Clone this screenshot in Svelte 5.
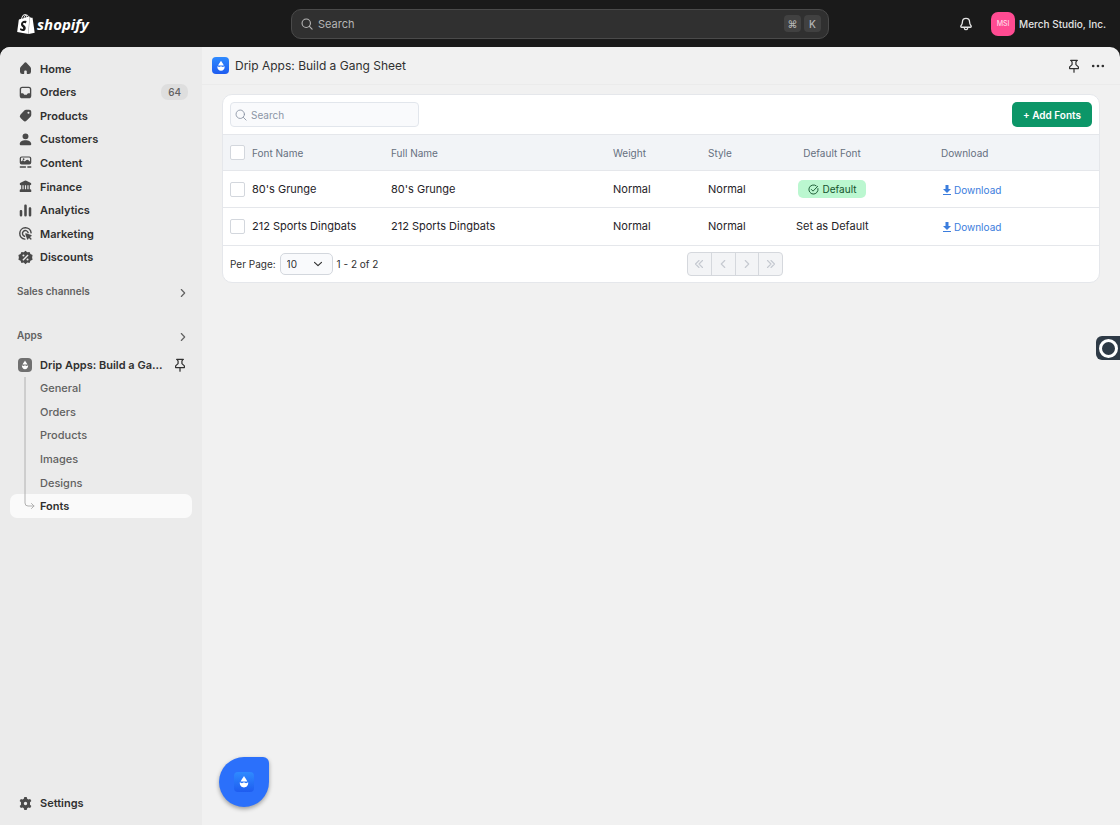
<script lang="ts">
  type NavItem = { label: string; icon: string; count?: number };

  // 20x20 glyphs, filled with the even-odd rule
  const icons: Record<string, string> = {
    home: 'M8.344 3.692a2.25 2.25 0 0 1 3.312 0l3.854 4.19a3.75 3.75 0 0 1 .99 2.538v3.33a2.75 2.75 0 0 1-2.75 2.75h-1.25a1 1 0 0 1-1-1v-2.25a1 1 0 0 0-1-1h-1a1 1 0 0 0-1 1v2.25a1 1 0 0 1-1 1h-1.25a2.75 2.75 0 0 1-2.75-2.75v-3.33c0-.94.353-1.846.99-2.539z',
    orders: 'M6.2 3.2h7.6a3 3 0 0 1 3 3v7.6a3 3 0 0 1-3 3h-7.6a3 3 0 0 1-3-3v-7.6a3 3 0 0 1 3-3zM6.2 4.8a1.4 1.4 0 0 0-1.4 1.4v4.6h1.9c.5 0 .9.3 1.1.7l.3.6c.2.4.6.6 1 .6h1.8c.4 0 .8-.2 1-.6l.3-.6c.2-.4.6-.7 1.1-.7h1.9v-4.6a1.4 1.4 0 0 0-1.4-1.4z',
    products: 'M10.6 3.2h3.7a2.5 2.5 0 0 1 2.5 2.5v3.5a3 3 0 0 1-.9 2.2l-4.5 4.5a2.9 2.9 0 0 1-4.1 0l-3.1-3.1a2.9 2.9 0 0 1 0-4.1l4.4-4.5a3 3 0 0 1 2-1zM13.5 5.5a1.2 1.2 0 1 0 0 2.4a1.2 1.2 0 0 0 0-2.4z',
    customers: 'M10 2.8a3.5 3.5 0 1 1 0 7a3.5 3.5 0 0 1 0-7zM3.2 15.2c0-2.5 3-4.3 6.8-4.3s6.8 1.8 6.8 4.3c0 .9-.7 1.6-1.6 1.6h-10.4c-.9 0-1.6-.7-1.6-1.6z',
    content: 'M5.5 2.8h9a2.3 2.3 0 0 1 2.3 2.3v5a2.3 2.3 0 0 1-2.3 2.3h-9a2.3 2.3 0 0 1-2.3-2.3v-5a2.3 2.3 0 0 1 2.3-2.3zM5.7 4.2a1 1 0 0 0-1 1v3.6l1.4-1a1.5 1.5 0 0 1 1.9.1l1 .9l2.2-1.7a1.5 1.5 0 0 1 1.9 0l2.2 1.7v-3.6a1 1 0 0 0-1-1zM7.8 5.1a1 1 0 1 1 0 2a1 1 0 0 1 0-2zM3.3 14.4h7.2v1.8h-7.2zM12.2 14.4h4.6v1.8h-4.6z',
    finance: 'M9 3.2a2.2 2.2 0 0 1 2 0l4.8 2.3c.6.3 1 .9 1 1.6c0 .8-.6 1.4-1.4 1.4h-.3v4.7h.4a1.3 1.3 0 0 1 1.3 1.3v1.3c0 .5-.3.8-.8.8h-12c-.5 0-.8-.3-.8-.8v-1.3a1.3 1.3 0 0 1 1.3-1.3h.4v-4.7h-.3a1.4 1.4 0 0 1-1.4-1.4c0-.7.4-1.3 1-1.6zM6.4 8.6v4.6h1.4v-4.6zM9.3 8.6v4.6h1.4v-4.6zM12.2 8.6v4.6h1.4v-4.6z',
    analytics: 'M10 2.8c.9 0 1.5.6 1.5 1.5v11.4a1.5 1.5 0 0 1-3 0v-11.4c0-.9.6-1.5 1.5-1.5zM4.7 9.3c.9 0 1.5.6 1.5 1.5v4.9a1.5 1.5 0 0 1-3 0v-4.9c0-.9.6-1.5 1.5-1.5zM15.3 6.1c.9 0 1.5.6 1.5 1.5v8.1a1.5 1.5 0 0 1-3 0v-8.1c0-.9.6-1.5 1.5-1.5z',
    discounts: 'M10 2l2.1 1.8l2.7-.4l1 2.6l2.5 1.1l-.5 2.8l.5 2.8l-2.5 1.1l-1 2.6l-2.7-.4l-2.1 1.8l-2.1-1.8l-2.7.4l-1-2.6l-2.5-1.1l.5-2.8l-.5-2.8l2.5-1.1l1-2.6l2.7.4zM7.6 6.5a1.2 1.2 0 1 0 0 2.4a1.2 1.2 0 0 0 0-2.4zM12.4 11.1a1.2 1.2 0 1 0 0 2.4a1.2 1.2 0 0 0 0-2.4zM12.4 6.5l-6.1 6.1l1.2 1.1l6.1-6.1z',
    settings: 'M8.6 2.3h2.8l.6 2.2l1.3.7l2.2-.6l1.4 2.4l-1.6 1.6v2.8l1.6 1.6l-1.4 2.4l-2.2-.6l-1.3.7l-.6 2.2h-2.8l-.6-2.2l-1.3-.7l-2.2.6l-1.4-2.4l1.6-1.6v-2.8l-1.6-1.6l1.4-2.4l2.2.6l1.3-.7zM10 8a2 2 0 1 0 0 4a2 2 0 0 0 0-4z'
  };

  const navItems: NavItem[] = [
    { label: 'Home', icon: 'home' },
    { label: 'Orders', icon: 'orders', count: 64 },
    { label: 'Products', icon: 'products' },
    { label: 'Customers', icon: 'customers' },
    { label: 'Content', icon: 'content' },
    { label: 'Finance', icon: 'finance' },
    { label: 'Analytics', icon: 'analytics' },
    { label: 'Marketing', icon: 'marketing' },
    { label: 'Discounts', icon: 'discounts' }
  ];

  const appName = 'Drip Apps: Build a Gang Sheet';
  const shortAppName = appName.slice(0, 21) + '...';
  const appPages = ['General', 'Orders', 'Products', 'Images', 'Designs', 'Fonts'];
  let currentPage = $state('Fonts');

  let fonts = $state([
    { name: "80's Grunge", fullName: "80's Grunge", weight: 'Normal', style: 'Normal', isDefault: true, selected: false },
    { name: '212 Sports Dingbats', fullName: '212 Sports Dingbats', weight: 'Normal', style: 'Normal', isDefault: false, selected: false }
  ]);

  let query = $state('');
  let perPage = $state('10');
  let visibleFonts = $derived(fonts.filter((f) => f.name.toLowerCase().includes(query.toLowerCase())));
  let allSelected = $derived(fonts.every((f) => f.selected));

  const pagerButtons = [
    { label: 'First page', d: 'M8 4L4 8l4 4M12 4L8 8l4 4' },
    { label: 'Previous page', d: 'M10 4L6 8l4 4' },
    { label: 'Next page', d: 'M6 4l4 4l-4 4' },
    { label: 'Last page', d: 'M4 4l4 4l-4 4M8 4l4 4l-4 4' }
  ];

  function toggleAll() {
    const next = !allSelected;
    fonts.forEach((f) => (f.selected = next));
  }

  function setDefault(name: string) {
    fonts.forEach((f) => (f.isDefault = f.name === name));
  }
</script>

{#snippet glyph(name: string)}
  <svg class="glyph" viewBox="0 0 20 20" aria-hidden="true">
    {#if name === 'marketing'}
      <g fill="none" stroke="currentColor" stroke-width="1.7" stroke-linecap="round">
        <path d="M16.6 9.2a6.7 6.7 0 1 0-7.4 7.4" />
        <path d="M13.1 9a3.4 3.4 0 1 0-4.2 4.2" />
      </g>
      <path fill="currentColor" d="M9.7 10.5c-.2-.5.3-1 .8-.8l6.3 2.2c.6.2.6 1 .1 1.2l-1.7.9l1.8 1.8c.7.7-.5 1.9-1.2 1.2l-1.8-1.8l-.9 1.7c-.2.5-1 .5-1.2-.1z" />
    {:else}
      <path fill="currentColor" fill-rule="evenodd" d={icons[name]} />
    {/if}
  </svg>
{/snippet}

{#snippet searchIcon()}
  <svg class="search-icon" viewBox="0 0 16 16" fill="none" stroke="currentColor" stroke-linecap="round" aria-hidden="true">
    <circle cx="7" cy="7" r="5.6" />
    <path d="M11.2 11.2l3.6 3.6" />
  </svg>
{/snippet}

{#snippet pin()}
  <svg class="pin" viewBox="0 0 16 16" fill="none" stroke="currentColor" stroke-width="1.4" stroke-linejoin="round" stroke-linecap="round" aria-hidden="true">
    <path d="M4.2 1.6h7.6M4.8 1.8l1 1.6v3l-2.800 2.600v1.900h10v-1.900l-2.800-2.600v-3l1-1.600M8 11.200v3.800" />
  </svg>
{/snippet}

{#snippet chevron()}
  <svg class="chevron" viewBox="0 0 12 12" fill="none" stroke="currentColor" stroke-width="1.4" stroke-linecap="round" stroke-linejoin="round" aria-hidden="true">
    <path d="M4 1.8L8 6l-4 4.2" />
  </svg>
{/snippet}

{#snippet drop()}
  <svg class="drop" viewBox="0 0 16 16" fill="currentColor" aria-hidden="true">
    <path d="M8 2c.7 1.6 2.6 3.4 3.3 5.4h-6.6c.7-2 2.6-3.8 3.3-5.4z" />
    <path d="M3.8 8.3l2.1.9l2.1-.9l2.1.9l2.1-.9c.2 3.2-1.7 5.2-4.2 5.2s-4.4-2-4.2-5.2z" />
  </svg>
{/snippet}

<div class="page">
  <header class="topbar">
    <a class="brand" href="#home">
      <svg class="bag" viewBox="0 0 24 24" fill="currentColor" aria-hidden="true">
        <path d="M15.337 23.979l7.216-1.561s-2.604-17.613-2.625-17.730c-.018-.116-.114-.192-.211-.192s-1.929-.136-1.929-.136-1.275-1.274-1.439-1.411c-.045-.037-.075-.057-.121-.074l-.914 21.104h.023zM11.710 11.305s-.81-.424-1.774-.424c-1.447 0-1.504.906-1.504 1.141 0 1.232 3.240 1.715 3.240 4.629 0 2.295-1.440 3.760-3.406 3.760-2.354 0-3.540-1.465-3.540-1.465l.646-2.086s1.245 1.066 2.280 1.066c.675 0 .975-.545.975-.932 0-1.619-2.654-1.694-2.654-4.359-.034-2.237 1.571-4.416 4.827-4.416 1.257 0 1.875.361 1.875.361l-.945 2.715-.02.01zM11.170.830c.136 0 .271.038.405.135-.984.465-2.064 1.639-2.508 3.992-.656.213-1.293.405-1.889.578C7.697 3.750 8.951.840 11.170.840V.830zm1.235 2.949v.135c-.754.232-1.583.484-2.394.736.466-1.777 1.333-2.645 2.085-2.971.193.501.309 1.176.309 2.100zm.539-2.234c.694.074 1.141.867 1.429 1.755-.349.114-.735.231-1.158.366v-.252c0-.752-.096-1.371-.271-1.871v.002zm2.992 1.289c-.02 0-.06.021-.078.021s-.289.075-.714.210c-.423-1.233-1.176-2.370-2.508-2.370h-.115C12.135.209 11.669 0 11.265 0 8.159 0 6.675 3.877 6.210 5.846c-1.194.365-2.063.636-2.160.674-.675.213-.694.232-.772.870-.075.462-1.830 14.063-1.830 14.063L15.009 24l.927-21.166z" />
      </svg>
      <span>shopify</span>
    </a>

    <label class="global-search">
      {@render searchIcon()}
      <input type="text" placeholder="Search" aria-label="Search the store" />
      <kbd>⌘</kbd>
      <kbd>K</kbd>
    </label>

    <div class="account">
      <button class="icon-btn" aria-label="Notifications">
        <svg viewBox="0 0 16 16" fill="none" stroke="currentColor" stroke-width="1.5" stroke-linejoin="round" aria-hidden="true">
          <path d="M8 1.6c-2.5 0-4.1 1.8-4.1 4.2c0 2-.5 2.9-1.6 4.2c-.6.8-.2 1.700.7 1.700h10c.9 0 1.300-.9.7-1.700c-1.100-1.300-1.600-2.200-1.600-4.200c0-2.400-1.600-4.200-4.100-4.200z" />
          <path d="M5.8 12c.2 1.5 1.1 2.4 2.2 2.4s2-.9 2.2-2.4" />
        </svg>
      </button>
      <button class="store">
        <span class="avatar">MSI</span>
        Merch Studio, Inc.
      </button>
    </div>
  </header>

  <div class="shell">
    <aside class="sidebar">
      <nav class="main-nav">
        {#each navItems as item}
          <a class="nav-item" href="#{item.icon}">
            {@render glyph(item.icon)}
            <span>{item.label}</span>
            {#if item.count}
              <span class="count">{item.count}</span>
            {/if}
          </a>
        {/each}
      </nav>

      <button class="section-head">Sales channels {@render chevron()}</button>
      <button class="section-head apps">Apps {@render chevron()}</button>

      <nav class="app-nav">
        <div class="nav-item app-title">
          <span class="app-badge">{@render drop()}</span>
          <a href="#app" title={appName}>{shortAppName}</a>
          <button class="icon-btn" aria-label="Unpin app">{@render pin()}</button>
        </div>
        {#each appPages as page}
          <a
            class="nav-item sub"
            class:active={page === currentPage}
            href="#{page}"
            onclick={() => (currentPage = page)}
          >
            <svg class="branch" viewBox="0 0 24 24" fill="none" stroke="currentColor" stroke-linecap="round" aria-hidden="true">
              {#if page === currentPage}
                <path d="M9 0v9a3 3 0 0 0 3 3h6M15.5 9.5L18 12l-2.5 2.5" />
              {:else}
                <path stroke-linecap="butt" d="M9 0v24" />
              {/if}
            </svg>
            <span>{page}</span>
          </a>
        {/each}
      </nav>

      <a class="nav-item settings" href="#settings">
        {@render glyph('settings')}
        <span>Settings</span>
      </a>
    </aside>

    <main>
      <div class="title-bar">
        <span class="app-logo">{@render drop()}</span>
        <h1>{appName}</h1>
        <button class="icon-btn" aria-label="Pin app">{@render pin()}</button>
        <button class="icon-btn" aria-label="More actions">
          <svg viewBox="0 0 16 16" fill="currentColor" aria-hidden="true">
            <circle cx="2.5" cy="8" r="1.5" />
            <circle cx="8" cy="8" r="1.5" />
            <circle cx="13.5" cy="8" r="1.5" />
          </svg>
        </button>
      </div>

      <section class="card">
        <div class="toolbar">
          <label class="font-search">
            {@render searchIcon()}
            <input type="text" placeholder="Search" aria-label="Search fonts" bind:value={query} />
          </label>
          <button class="add-btn">+ Add Fonts</button>
        </div>

        <table>
          <colgroup>
            <col class="col-check" />
            <col class="col-name" />
            <col class="col-full" />
            <col class="col-weight" />
            <col class="col-style" />
            <col class="col-default" />
            <col />
          </colgroup>
          <thead>
            <tr>
              <th class="check"><input type="checkbox" aria-label="Select all fonts" checked={allSelected} onchange={toggleAll} /></th>
              <th>Font Name</th>
              <th>Full Name</th>
              <th>Weight</th>
              <th>Style</th>
              <th class="center">Default Font</th>
              <th class="download">Download</th>
            </tr>
          </thead>
          <tbody>
            {#each visibleFonts as font}
              <tr>
                <td class="check"><input type="checkbox" aria-label="Select {font.name}" bind:checked={font.selected} /></td>
                <td>{font.name}</td>
                <td>{font.fullName}</td>
                <td>{font.weight}</td>
                <td>{font.style}</td>
                <td class="center">
                  {#if font.isDefault}
                    <span class="default-badge">
                      <svg viewBox="0 0 12 12" fill="none" stroke="currentColor" stroke-linecap="round" stroke-linejoin="round" aria-hidden="true">
                        <path d="M10.9 5a5 5 0 1 1-2-3.1" />
                        <path d="M3.7 6l1.8 1.8l5-5.2" />
                      </svg>
                      Default
                    </span>
                  {:else}
                    <button onclick={() => setDefault(font.name)}>Set as Default</button>
                  {/if}
                </td>
                <td class="download">
                  <a class="download-link" href="#download">
                    <svg viewBox="0 0 10 12" fill="currentColor" aria-hidden="true">
                      <path d="M3.5 1h3v4h2.500l-4 4l-4-4h2.500zM1 10h8v1h-8z" />
                    </svg>
                    Download
                  </a>
                </td>
              </tr>
            {/each}
          </tbody>
        </table>

        <div class="table-foot">
          <div class="per-page">
            <label for="per-page">Per Page:</label>
            <span class="select">
              <select id="per-page" bind:value={perPage}>
                <option>10</option>
                <option>25</option>
                <option>50</option>
              </select>
              {@render chevron()}
            </span>
            <span>1 - {visibleFonts.length} of {visibleFonts.length}</span>
          </div>
          <div class="pager">
            {#each pagerButtons as b}
              <button aria-label={b.label} disabled>
                <svg viewBox="0 0 16 16" fill="none" stroke="currentColor" stroke-width="1.3" stroke-linecap="round" stroke-linejoin="round" aria-hidden="true">
                  <path d={b.d} />
                </svg>
              </button>
            {/each}
          </div>
        </div>
      </section>
    </main>
  </div>

  <button class="chat" aria-label="Open help">
    <span class="app-logo">{@render drop()}</span>
  </button>
  <button class="recorder" aria-label="Open recorder"><span></span></button>
</div>

<style>
  :global(body) {
    background: #1a1a1a;
  }

  .page {
    min-height: 100vh;
    display: flex;
    flex-direction: column;
    font-family: Inter, sans-serif;
    font-size: 11px;
    line-height: 16px;
    color: #303030;
  }

  .page :global(*) {
    box-sizing: border-box;
  }

  button,
  input,
  select {
    font: inherit;
    color: inherit;
  }

  button {
    border: none;
    background: none;
    padding: 0;
    cursor: pointer;
  }

  a {
    color: inherit;
    text-decoration: none;
  }

  svg {
    display: block;
    flex: none;
  }

  /* Top bar */
  .topbar {
    display: grid;
    grid-template-columns: 1fr minmax(0, 538px) 1fr;
    align-items: center;
    height: 47px;
    background: #1a1a1a;
    color: #e3e3e3;
  }

  .brand {
    display: flex;
    align-items: center;
    gap: 1px;
    padding-left: 16px;
    color: #fff;
    font: italic 700 15px/20px 'Open Sans', sans-serif;
  }

  .bag {
    width: 20px;
    height: 20px;
  }

  .global-search {
    display: flex;
    align-items: center;
    gap: 3px;
    height: 30px;
    padding: 0 7px 0 9px;
    border: 1px solid #4a4a4a;
    border-radius: 10px;
    background: #303030;
    color: #b5b5b5;
  }

  .search-icon {
    width: 12px;
    height: 12px;
    stroke-width: 1.5;
  }

  input[type='text'] {
    flex: 1;
    min-width: 0;
    border: none;
    outline: none;
    background: none;
    padding: 0;
  }

  .global-search input {
    padding-left: 2px;
  }

  input::placeholder {
    color: inherit;
    opacity: 1;
  }

  kbd {
    display: grid;
    place-items: center;
    width: 17px;
    height: 17px;
    border-radius: 4px;
    background: #414141;
    font: 500 10px/16px Inter, 'DejaVu Sans', sans-serif;
  }

  .account {
    display: flex;
    justify-content: flex-end;
    align-items: center;
    gap: 18px;
    padding-right: 14px;
  }

  .icon-btn svg {
    width: 14px;
    height: 14px;
  }

  .store {
    display: flex;
    align-items: center;
    gap: 4px;
    font-size: 10px;
    font-weight: 500;
  }

  .avatar {
    display: grid;
    place-items: center;
    width: 24px;
    height: 24px;
    border-radius: 7px;
    background: #ff4b92;
    color: #ffd9e8;
    font-size: 7px;
  }

  /* Shell */
  .shell {
    flex: 1;
    display: flex;
    border-radius: 10px 10px 0 0;
    background: #f1f1f1;
    overflow: hidden;
  }

  .sidebar {
    display: flex;
    flex-direction: column;
    flex: none;
    width: 202px;
    padding: 10px;
    background: #ebebeb;
  }

  .main-nav,
  .app-nav {
    display: grid;
    grid-template-columns: minmax(0, 1fr);
    grid-auto-rows: minmax(0, 1fr);
  }

  .main-nav {
    height: 212px;
  }

  .nav-item {
    display: flex;
    align-items: center;
    gap: 6px;
    padding: 0 4px 0 7px;
    border-radius: 7px;
    font-weight: 600;
  }

  .glyph {
    width: 17px;
    height: 17px;
    color: #4a4a4a;
  }

  .count {
    margin-left: auto;
    padding: 0 7px;
    border-radius: 7px;
    background: #dedede;
    color: #616161;
    font-size: 10px;
    font-weight: 500;
  }

  .section-head {
    display: flex;
    justify-content: space-between;
    align-items: center;
    height: 24px;
    margin-top: 10px;
    padding: 0 4px 0 7px;
    color: #616161;
    font-size: 10px;
    font-weight: 600;
  }

  .section-head.apps {
    margin: 20px 0 6px;
  }

  .chevron {
    width: 10px;
    height: 10px;
  }

  .section-head .chevron {
    margin-top: 3px;
  }

  .app-nav {
    height: 165px;
  }

  .app-title a {
    flex: 1;
    white-space: nowrap;
  }

  .app-title .icon-btn {
    margin-right: 1px;
  }

  .app-badge,
  .app-logo {
    display: grid;
    place-items: center;
    flex: none;
    border-radius: 4px;
    color: #fff;
  }

  .app-badge {
    width: 14px;
    height: 14px;
    margin: 0 2px 0 1px;
    background: #707070;
  }

  .drop {
    width: 12px;
    height: 12px;
  }

  .sub {
    padding-left: 6px;
    gap: 0;
    color: #616161;
    font-weight: 450;
    overflow: hidden;
  }

  .sub.active {
    background: #fafafa;
    color: #303030;
    font-weight: 600;
  }

  .branch {
    width: 24px;
    height: 24px;
    color: #b0b0b0;
  }

  .settings {
    height: 24px;
    margin-top: auto;
  }

  /* Content */
  main {
    flex: 1;
    min-width: 0;
  }

  .title-bar {
    display: flex;
    align-items: center;
    gap: 10px;
    height: 38px;
    padding: 0 15px 0 10px;
    border-bottom: 1px solid #ebebeb;
  }

  .title-bar h1 {
    flex: 1;
    margin: 0 0 0 -4px;
    font-size: 12px;
    font-weight: 400;
  }

  .app-logo {
    width: 17px;
    height: 17px;
    background: linear-gradient(#2f8bff, #1e5cf0);
  }

  .app-logo .drop {
    width: 14px;
    height: 14px;
  }

  .card {
    margin: 9px 20px;
    border: 1px solid #e5e7eb;
    border-radius: 10px;
    background: #fff;
    overflow: hidden;
  }

  .toolbar {
    display: flex;
    justify-content: space-between;
    align-items: center;
    height: 39px;
    padding: 0 7px;
  }

  .font-search {
    display: flex;
    align-items: center;
    gap: 4px;
    width: 189px;
    height: 25px;
    padding: 0 4px;
    border: 1px solid #e2e6ec;
    border-radius: 4px;
    background: #f9fafc;
    color: #8b95a5;
    font-size: 10px;
  }

  .font-search .search-icon {
    stroke-width: 1.2;
  }

  .font-search input:not(:placeholder-shown) {
    color: #303030;
  }

  .add-btn {
    height: 25px;
    padding: 0 11px;
    border-radius: 5px;
    background: #0c9668;
    color: #fff;
    font-size: 10px;
    font-weight: 600;
  }

  table {
    width: 100%;
    table-layout: fixed;
    border-collapse: collapse;
  }

  .col-check { width: 29px; }
  .col-name { width: 139px; }
  .col-full { width: 222px; }
  .col-weight { width: 95px; }
  .col-style { width: 88px; }
  .col-default { width: 72px; }

  tr {
    height: 37px;
    border-top: 1px solid #e5e7eb;
  }

  thead tr {
    height: 36px;
  }

  th,
  td {
    padding: 0;
    text-align: left;
    white-space: nowrap;
    color: #1f2328;
    font-weight: 400;
  }

  th {
    background: #f2f4f7;
    color: #667080;
    font-size: 10px;
  }

  .check {
    padding-left: 7px;
  }

  th.center,
  td.center {
    text-align: center;
  }

  th.download {
    padding-left: 73px;
  }

  td.download {
    padding-left: 74px;
  }

  input[type='checkbox'] {
    appearance: none;
    display: block;
    width: 15px;
    height: 15px;
    margin: 0;
    border: 1px solid #d3d7dd;
    border-radius: 2px;
    background: #fff;
  }

  input[type='checkbox']:checked {
    border-color: #2563eb;
    background: #2563eb;
  }

  .default-badge {
    display: inline-flex;
    align-items: center;
    gap: 4px;
    height: 18px;
    padding: 0 10px;
    border-radius: 5px;
    background: #bbf7d0;
    color: #14532d;
    font-size: 10px;
    vertical-align: middle;
  }

  .default-badge svg {
    width: 11px;
    height: 11px;
  }

  .download-link {
    display: inline-flex;
    align-items: center;
    gap: 2px;
    color: #3b7ddd;
    font-size: 10px;
    vertical-align: middle;
  }

  .download-link svg {
    width: 10px;
    height: 12px;
  }

  .table-foot {
    display: grid;
    grid-template-columns: 464px 1fr;
    align-items: center;
    height: 37px;
    border-top: 1px solid #e5e7eb;
    font-size: 10px;
  }

  .per-page {
    display: flex;
    align-items: center;
    gap: 4px;
    padding-left: 7px;
  }

  .select {
    display: grid;
    align-items: center;
  }

  .select select,
  .select .chevron {
    grid-area: 1 / 1;
  }

  select {
    appearance: none;
    width: 53px;
    height: 22px;
    padding: 0 6px;
    border: 1px solid #d3d7dd;
    border-radius: 5px;
    background: #f9fafc;
  }

  .select .chevron {
    justify-self: end;
    margin-right: 10px;
    transform: rotate(90deg);
    pointer-events: none;
  }

  .pager {
    display: flex;
    justify-self: start;
    width: 96px;
    border: 1px solid #d5d8dd;
    border-radius: 4px;
    background: #f3f4f6;
  }

  .pager button {
    flex: 1;
    display: grid;
    place-items: center;
    height: 22px;
    color: #c5c9d0;
  }

  .pager button + button {
    border-left: 1px solid #d5d8dd;
  }

  .pager svg {
    width: 14px;
    height: 14px;
  }

  /* Floating widgets */
  .chat {
    position: fixed;
    left: 219px;
    bottom: 18px;
    display: grid;
    place-items: center;
    width: 50px;
    height: 50px;
    border-radius: 50% 6px 50% 50%;
    background: #2b70fb;
    box-shadow: 0 2px 4px rgba(0, 0, 0, 0.35);
  }

  .chat .app-logo {
    width: 20px;
    height: 20px;
  }

  .chat .drop {
    width: 16px;
    height: 16px;
  }

  .recorder {
    position: fixed;
    right: 0;
    top: 336px;
    display: flex;
    align-items: center;
    width: 24px;
    height: 24px;
    padding-left: 3px;
    border-radius: 6px 0 0 6px;
    background: #2e3a46;
  }

  .recorder span {
    width: 19px;
    height: 19px;
    border: 3px solid #fff;
    border-radius: 50%;
  }
</style>
